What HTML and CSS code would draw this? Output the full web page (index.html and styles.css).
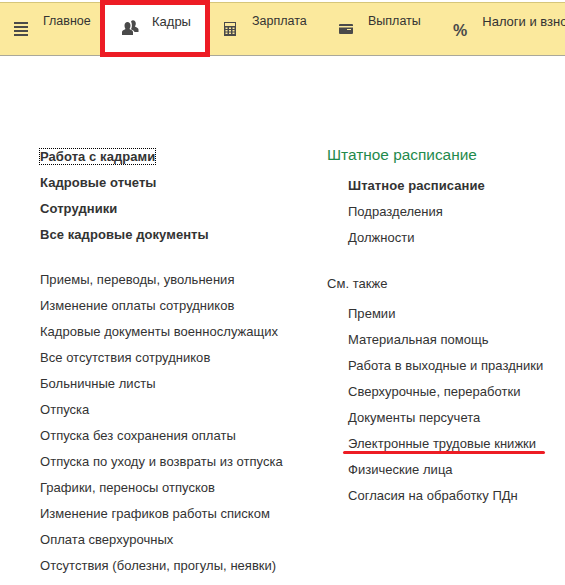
FILE: index.html
```html
<!DOCTYPE html>
<html lang="ru">
<head>
<meta charset="utf-8">
<title>Кадры</title>
<link rel="stylesheet" href="styles.css">
</head>
<body>
<nav class="topbar">
  <div class="tab tab-main">
    <svg class="icon" width="14" height="14" viewBox="0 0 14 14"><path fill="#4a4a4a" d="M0 0h14v2H0zM0 4h14v2H0zM0 8h14v2H0zM0 12h14v2H0z"/></svg>
    <span class="tab-label">Главное</span>
  </div>
  <div class="tab tab-hr">
    <svg class="icon" width="17" height="16" viewBox="0 0 17 16"><path fill="#4a4a4a" d="M0 15v-3c0-1.500 2-2 3.500-3C3 8 2.500 7 2.500 5.500 2.500 3.500 3.800 2 5.500 2S8.500 3.500 8.500 5.500C8.500 7 8 8 7.500 9 9 10 11 10.500 11 12v3zM9 1.500C9.500.700 10.300.300 11 .300c1.700 0 2.800 1.400 2.800 3.200 0 1.300-.5 2.400-1 3.100 1.300.9 3.700 1.400 3.700 3v2.400h-4c-.5-1.400-2.300-2-3.500-2.700.6-1.200.9-2.300.9-3.700C9.900 4 9.600 2.600 9 1.500z"/></svg>
    <span class="tab-label">Кадры</span>
  </div>
  <div class="tab tab-pay">
    <svg class="icon" width="12" height="14" viewBox="0 0 12 14"><path fill="#4a4a4a" fill-rule="evenodd" d="M0 0h12v14H0zM1 1v3h10V1zM1.500 5.500v1.500h2V5.500zm3.500 0v1.500h2V5.500zm3.500 0v1.500h2V5.500zM1.500 8v1.500h2V8zM5 8v1.500h2V8zm3.500 0v1.500h2V8zM1.500 10.500V12h2v-1.500zm3.500 0V12h2v-1.500zm3.500 0V12h2v-1.500z"/></svg>
    <span class="tab-label">Зарплата</span>
  </div>
  <div class="tab tab-out">
    <svg class="icon" width="14" height="10" viewBox="0 0 14 10"><path fill="#4a4a4a" fill-rule="evenodd" d="M1 0h12a1 1 0 0 1 1 1v1H0V1a1 1 0 0 1 1-1zM0 3.500h14V9a1 1 0 0 1-1 1H1a1 1 0 0 1-1-1zM8 5v1h4V5z"/></svg>
    <span class="tab-label">Выплаты</span>
  </div>
  <div class="tab tab-tax">
    <span class="percent">%</span>
    <span class="tab-label">Налоги и взносы</span>
  </div>
</nav>
<main class="content">
  <section class="col col-left">
    <ul class="links strong first-group">
      <li><span class="focused">Работа с кадрами</span></li>
      <li>Кадровые отчеты</li>
      <li>Сотрудники</li>
      <li>Все кадровые документы</li>
    </ul>
    <ul class="links">
      <li>Приемы, переводы, увольнения</li>
      <li>Изменение оплаты сотрудников</li>
      <li>Кадровые документы военнослужащих</li>
      <li>Все отсутствия сотрудников</li>
      <li>Больничные листы</li>
      <li>Отпуска</li>
      <li>Отпуска без сохранения оплаты</li>
      <li>Отпуска по уходу и возвраты из отпуска</li>
      <li>Графики, переносы отпусков</li>
      <li>Изменение графиков работы списком</li>
      <li>Оплата сверхурочных</li>
      <li>Отсутствия (болезни, прогулы, неявки)</li>
    </ul>
  </section>
  <section class="col col-right">
    <h2 class="group-title">Штатное расписание</h2>
    <ul class="links indented">
      <li class="bold">Штатное расписание</li>
      <li>Подразделения</li>
      <li>Должности</li>
    </ul>
    <h3 class="see-also">См. также</h3>
    <ul class="links indented">
      <li>Премии</li>
      <li>Материальная помощь</li>
      <li>Работа в выходные и праздники</li>
      <li>Сверхурочные, переработки</li>
      <li>Документы персучета</li>
      <li class="marked">Электронные трудовые книжки</li>
      <li>Физические лица</li>
      <li>Согласия на обработку ПДн</li>
    </ul>
  </section>
</main>
</body>
</html>
```
FILE: styles.css
```css
html, body {
  margin: 0;
  padding: 0;
  width: 565px;
  height: 585px;
  overflow: hidden;
  background: #fff;
  font-family: "Liberation Sans", Arial, sans-serif;
  font-size: 13px;
  letter-spacing: 0.03px;
  color: #333;
}
ul { list-style: none; margin: 0; padding: 0; }

.topbar {
  display: flex;
  height: 54px;
  margin-top: 2px;
  box-sizing: border-box;
  background: #fbe99d;
  border-top: 1px solid #d6c67a;
  border-bottom: 1px solid #aaa89a;
  white-space: nowrap;
}
.tab {
  display: flex;
  align-items: flex-start;
  flex: none;
  box-sizing: border-box;
  height: 100%;
}
.tab-label { margin-top: 10px; line-height: 17px; font-size: 12.5px; letter-spacing: 0; }
.icon { flex: none; margin-top: 19px; }
.tab-main { width: 100px; padding-left: 14px; }
.tab-main .tab-label { margin-left: 15px; }
.tab-hr {
  width: 110px;
  margin-top: -3px;
  height: 57px;
  background: #fff;
  border: 5px solid #ed1c24;
  padding-left: 17px;
}
.tab-hr .icon { margin-top: 15px; }
.tab-hr .tab-label { margin-left: 13px; margin-top: 8px; font-size: 13px; }
.tab-pay { width: 113px; padding-left: 14px; }
.tab-pay .icon { margin-top: 19px; }
.tab-pay .tab-label { margin-left: 16px; }
.tab-out { width: 115px; padding-left: 16px; }
.tab-out .icon { margin-top: 21px; }
.tab-out .tab-label { margin-left: 15px; }
.tab-tax { padding-left: 15px; }
.percent { font-size: 16px; font-weight: bold; color: #4a4a4a; margin-top: 19px; }
.tab-tax .tab-label { margin-left: 15px; font-size: 13px; }

.content {
  display: flex;
  padding: 90px 0 0 40px;
}
.col-left { width: 287px; flex: none; }
.links li { height: 26px; line-height: 22px; white-space: nowrap; }
.strong li { font-weight: bold; letter-spacing: 0.07px; }
.first-group { margin-bottom: 19px; }
.focused { outline: 1px dotted #000; outline-offset: 0; }
.bold { font-weight: bold; letter-spacing: 0.07px; }
.col-right { margin-top: -2px; }
.group-title {
  margin: 0 0 9px;
  font-size: 15.4px;
  letter-spacing: 0;
  font-weight: normal;
  line-height: 22px;
  color: #1f8a4c;
}
.indented { padding-left: 21px; }
.see-also {
  margin: 20px 0 8px;
  font-size: 13px;
  font-weight: normal;
  line-height: 22px;
}
.marked { position: relative; }
.marked::after {
  content: "";
  position: absolute;
  left: -5px;
  top: 18px;
  width: 202px;
  height: 3px;
  border-radius: 2px;
  background: #ed1c24;
}
```
